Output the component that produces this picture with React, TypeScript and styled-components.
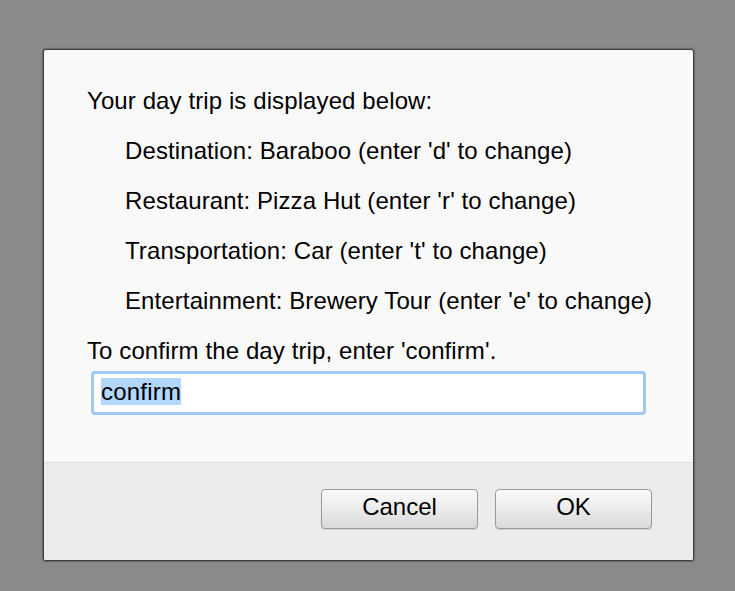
import React from 'react'
import styled, { createGlobalStyle } from 'styled-components'

const GlobalStyle = createGlobalStyle`
  html, body {
    margin: 0;
    padding: 0;
    background: #8a8a8a;
  }
  body {
    font-family: 'Liberation Sans', Arial, Helvetica, sans-serif;
    color: #000;
  }
`

const Backdrop = styled.div`
  min-height: 100vh;
  box-sizing: border-box;
  padding: 49px 0 0 43px;
`

const Dialog = styled.div`
  width: 651px;
  height: 512px;
  box-sizing: border-box;
  display: flex;
  flex-direction: column;
  border: 1px solid #3d3d3d;
  border-radius: 3px;
  box-shadow: 0 0 1px 1px rgba(0, 0, 0, 0.25);
  background: #f9f9f9;
  overflow: hidden;
`

const Body = styled.div`
  flex: 1;
  display: flex;
  flex-direction: column;
  gap: 22px;
  padding: 37px 43px 0 43px;
`

const Line = styled.div<{ indent?: boolean }>`
  font-size: 24px;
  line-height: 28px;
  letter-spacing: 0.1px;
  white-space: nowrap;
  padding-left: ${(props) => (props.indent ? '38px' : '0')};
`

const Prompt = styled(Line)`
  margin-bottom: -16px;
`

const FakeInput = styled.div`
  margin: 0 4px;
  height: 44px;
  box-sizing: border-box;
  border: 3px solid #9fc9f5;
  border-radius: 4px;
  background: #fff;
  padding: 4px 7px 0 7px;
  font-size: 24px;
  line-height: 27px;
  letter-spacing: 0.2px;
`

const Selected = styled.span`
  background: #b3d6fd;
`

const Footer = styled.div`
  height: 98px;
  box-sizing: border-box;
  border-top: 1px solid #dedede;
  background: #ececec;
  display: flex;
  justify-content: flex-end;
  align-items: flex-start;
  gap: 17px;
  padding: 26px 41px 0 0;
`

const Button = styled.button`
  width: 157px;
  height: 40px;
  box-sizing: border-box;
  border: 1px solid #9a9a9a;
  border-radius: 4px;
  background: linear-gradient(#fbfbfb, #e9e9e9 55%, #d9d9d9);
  box-shadow: 0 1px 1px rgba(0, 0, 0, 0.12);
  font-family: 'Liberation Sans', Arial, Helvetica, sans-serif;
  font-size: 24px;
  color: #000;
  padding: 0 0 4px 0;
  line-height: 34px;
`

const options = [
  "Destination: Baraboo (enter 'd' to change)",
  "Restaurant: Pizza Hut (enter 'r' to change)",
  "Transportation: Car (enter 't' to change)",
  "Entertainment: Brewery Tour (enter 'e' to change)",
]

const App: React.FC = () => {
  return (
    <>
      <GlobalStyle />
      <Backdrop>
        <Dialog>
          <Body>
            <Line>Your day trip is displayed below:</Line>
            {options.map((text) => (
              <Line indent key={text}>
                {text}
              </Line>
            ))}
            <Prompt>To confirm the day trip, enter 'confirm'.</Prompt>
            <FakeInput>
              <Selected>confirm</Selected>
            </FakeInput>
          </Body>
          <Footer>
            <Button>Cancel</Button>
            <Button>OK</Button>
          </Footer>
        </Dialog>
      </Backdrop>
    </>
  )
}

export default App
